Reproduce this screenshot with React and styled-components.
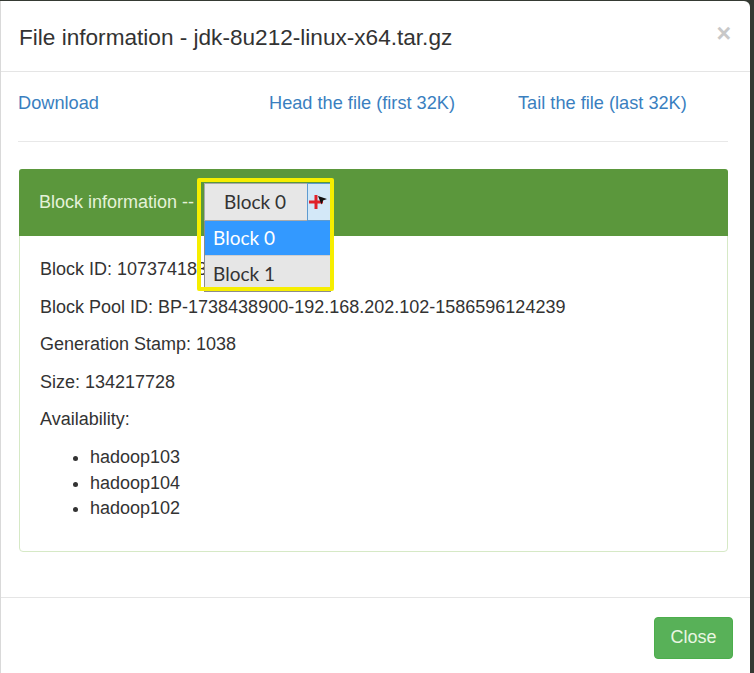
import React from "react";
import styled, { createGlobalStyle } from "styled-components";

const GlobalStyle = createGlobalStyle`
  html, body {
    margin: 0;
    padding: 0;
    background: #353a33;
    overflow: hidden;
  }
  body {
    font-family: "Liberation Sans", Arial, sans-serif;
    color: #333;
  }
`;

const Modal = styled.div`
  width: 749px;
  height: 700px;
  margin-top: 1px;
  background: #fff;
  border-left: 1px solid #d9d9d9;
  border-radius: 0 6px 0 0;
  display: flex;
  flex-direction: column;
`;

const Header = styled.div`
  height: 71px;
  box-sizing: border-box;
  border-bottom: 1px solid #e5e5e5;
  display: flex;
  align-items: center;
  justify-content: space-between;
  padding: 4px 19px 0 18px;
`;

const Title = styled.h4`
  margin: 0;
  font-size: 22.6px;
  font-weight: normal;
  color: #333;
`;

const CloseX = styled.span`
  font-size: 25px;
  font-weight: bold;
  color: #c8c8c8;
  line-height: 1;
  margin-top: -10px;
`;

const Body = styled.div`
  padding: 0 22px 0 17px;
`;

const LinkRow = styled.div`
  display: grid;
  grid-template-columns: 251px 249px 1fr;
  padding-top: 21px;
  height: 70px;
  box-sizing: border-box;
  border-bottom: 1px solid #e8e8e8;
  margin-bottom: 27px;
`;

const Link = styled.a`
  color: #3a7fbf;
  font-size: 18.2px;
  text-decoration: none;
  cursor: pointer;
`;

const Panel = styled.div`
  margin-left: 1px;
  border: 1px solid #d6e9c6;
  border-radius: 4px;
`;

const PanelHeading = styled.div`
  height: 67px;
  background: #5b973c;
  border-radius: 3px 3px 0 0;
  display: flex;
  align-items: center;
  padding-left: 20px;
  color: #e4f2d8;
  font-size: 18px;
  box-sizing: border-box;
  margin: -1px -1px 0;
`;

const SelectWrap = styled.div`
  position: relative;
  margin-left: 10px;
  margin-top: -2px;
`;

const SelectBox = styled.div`
  width: 127px;
  height: 38px;
  box-sizing: border-box;
  border: 1px solid #a9a9a9;
  background: #e7e7e7;
  display: flex;
  font-family: Lato, "Noto Sans", sans-serif;
  font-size: 19px;
  color: #333;
`;

const SelectText = styled.div`
  flex: 1;
  display: flex;
  align-items: center;
  padding-left: 19px;
`;

const ArrowBtn = styled.div`
  width: 22px;
  border: 1px solid #5e9bd0;
  background: #d3e8f8;
  margin: -1px -1px -1px 0;
  position: relative;
`;

const Cursor = styled.svg`
  position: absolute;
  left: 0;
  top: 8px;
`;

const OptionList = styled.div`
  position: absolute;
  left: 0;
  top: 38px;
  width: 127px;
  border: 1px solid #8c8c8c;
  border-top: none;
  box-sizing: border-box;
  font-family: Lato, "Noto Sans", sans-serif;
  font-size: 19px;
  z-index: 2;
`;

const Option = styled.div`
  height: ${p => p.$h}px;
  display: flex;
  align-items: center;
  padding-left: 8px;
  background: ${p => (p.$active ? "#3399ff" : "#e6e6e6")};
  color: ${p => (p.$active ? "#fff" : "#333")};
  border-top: ${p => (p.$active ? "none" : "1px solid #cfcfcf")};
`;

const Highlight = styled.div`
  position: absolute;
  left: -7px;
  top: -5px;
  width: 137px;
  height: 113px;
  box-sizing: border-box;
  border: 4px solid #f6ee00;
  border-radius: 2px;
  z-index: 3;
  pointer-events: none;
`;

const PanelBody = styled.div`
  padding: 22px 20px 18px;
  font-size: 18px;
  color: #333;
`;

const Line = styled.p`
  margin: 0 0 14.5px;
  line-height: 23px;
`;

const HostList = styled.ul`
  margin: 14px 0 11px;
  padding-left: 50px;
  line-height: 25.5px;
`;

const Footer = styled.div`
  margin-top: 45px;
  border-top: 1px solid #e5e5e5;
  display: flex;
  justify-content: flex-end;
  padding: 19px 17px 0 0;
`;

const Button = styled.button`
  width: 79px;
  height: 42px;
  background: #58b158;
  border: 1px solid #4cae4c;
  border-radius: 4px;
  color: #e9f6e2;
  font-family: "Liberation Sans", Arial, sans-serif;
  font-size: 18px;
  cursor: pointer;
`;

const hosts = ["hadoop103", "hadoop104", "hadoop102"];

export default function App() {
  return (
    <>
      <GlobalStyle />
      <Modal>
        <Header>
          <Title>File information - jdk-8u212-linux-x64.tar.gz</Title>
          <CloseX>×</CloseX>
        </Header>
        <Body>
          <LinkRow>
            <div><Link>Download</Link></div>
            <div><Link>Head the file (first 32K)</Link></div>
            <div><Link>Tail the file (last 32K)</Link></div>
          </LinkRow>
          <Panel>
            <PanelHeading>
              Block information --
              <SelectWrap>
                <SelectBox>
                  <SelectText>Block 0</SelectText>
                  <ArrowBtn>
                    <Cursor width="22" height="20" viewBox="0 0 22 20">
                      <path d="M8 3v14M1 10h14" stroke="#e0202a" strokeWidth="3" />
                      <path d="M10 4l9 3-4 1.5-1.5 4z" fill="#111" />
                    </Cursor>
                  </ArrowBtn>
                </SelectBox>
                <OptionList>
                  <Option $active $h={34}>Block 0</Option>
                  <Option $h={35}>Block 1</Option>
                </OptionList>
                <Highlight />
              </SelectWrap>
            </PanelHeading>
            <PanelBody>
              <Line>Block ID: 1073741836</Line>
              <Line>Block Pool ID: BP-1738438900-192.168.202.102-1586596124239</Line>
              <Line>Generation Stamp: 1038</Line>
              <Line>Size: 134217728</Line>
              <Line style={{ marginBottom: 0 }}>Availability:</Line>
              <HostList>
                {hosts.map(h => <li key={h}>{h}</li>)}
              </HostList>
            </PanelBody>
          </Panel>
        </Body>
        <Footer>
          <Button>Close</Button>
        </Footer>
      </Modal>
    </>
  );
}
